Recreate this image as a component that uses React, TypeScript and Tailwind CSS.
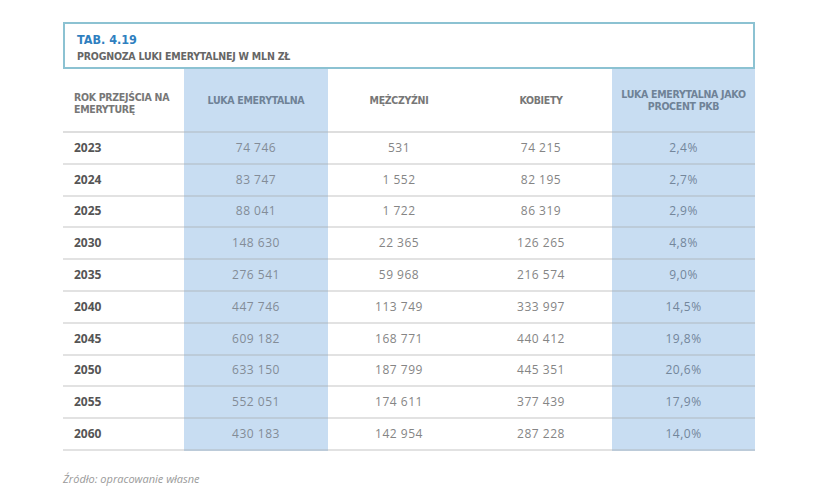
import React from "react";

const rows: [string, string, string, string, string][] = [
  ["2023", "74 746", "531", "74 215", "2,4%"],
  ["2024", "83 747", "1 552", "82 195", "2,7%"],
  ["2025", "88 041", "1 722", "86 319", "2,9%"],
  ["2030", "148 630", "22 365", "126 265", "4,8%"],
  ["2035", "276 541", "59 968", "216 574", "9,0%"],
  ["2040", "447 746", "113 749", "333 997", "14,5%"],
  ["2045", "609 182", "168 771", "440 412", "19,8%"],
  ["2050", "633 150", "187 799", "445 351", "20,6%"],
  ["2055", "552 051", "174 611", "377 439", "17,9%"],
  ["2060", "430 183", "142 954", "287 228", "14,0%"],
];

export default function App() {
  return (
    <div className="w-[828px] h-[504px] bg-white pl-[63px] pt-[22px] font-['Open_Sans',sans-serif]">
      <div className="w-[692px]">
        <div className="h-[47px] border-2 border-[#8cc2d2] pl-[12px] pt-[9px] flex flex-col font-['DejaVu_Sans_Condensed','DejaVu_Sans',sans-serif] font-stretch-condensed font-bold">
          <div className="text-[12.5px] leading-[14px] text-[#2f7fbf]">TAB. 4.19</div>
          <div className="mt-[3px] text-[10.5px] leading-[12px] tracking-[-0.2px] text-[#666]">PROGNOZA LUKI EMERYTALNEJ W MLN ZŁ</div>
        </div>
        <div className="grid grid-cols-[121px_144px_142px_142px_143px] font-['DejaVu_Sans_Condensed','DejaVu_Sans',sans-serif] font-stretch-condensed tracking-[-0.3px]">
          <div className="h-[64px] border-b-2 border-[#dedede] pt-[22px] pl-[11px] text-[10.5px] leading-[12px] font-bold text-[#777]">
            ROK PRZEJŚCIA NA<br />EMERYTURĘ
          </div>
          <div className="h-[64px] border-b-2 border-[#bccbd9] bg-[#c8ddf2] flex items-center justify-center text-[10.5px] leading-[12px] font-bold text-[#6f8297]">
            LUKA EMERYTALNA
          </div>
          <div className="h-[64px] border-b-2 border-[#dedede] flex items-center justify-center text-[10.5px] leading-[12px] font-bold text-[#777]">
            MĘŻCZYŹNI
          </div>
          <div className="h-[64px] border-b-2 border-[#dedede] flex items-center justify-center text-[10.5px] leading-[12px] font-bold text-[#777]">
            KOBIETY
          </div>
          <div className="h-[64px] border-b-2 border-[#bccbd9] bg-[#c8ddf2] flex flex-col items-center justify-center text-[10.5px] leading-[12px] font-bold text-[#6f8297] text-center">
            LUKA EMERYTALNA JAKO<br />PROCENT PKB
          </div>
        </div>
        <div className="grid grid-cols-[121px_144px_142px_142px_143px] font-['Open_Sans',sans-serif]">
          {rows.map((r) => (
            <React.Fragment key={r[0]}>
              <div className="h-[31.8px] border-b-2 border-[#e2e2e2] flex items-center pl-[11px] text-[12px] font-bold text-[#555]">
                {r[0]}
              </div>
              <div className="h-[31.8px] border-b-2 border-[#bccbd9] bg-[#c8ddf2] flex items-center justify-center text-[12px] tracking-[0.5px] text-[#838c97]">
                {r[1]}
              </div>
              <div className="h-[31.8px] border-b-2 border-[#e2e2e2] flex items-center justify-center text-[12px] tracking-[0.5px] text-[#858585]">
                {r[2]}
              </div>
              <div className="h-[31.8px] border-b-2 border-[#e2e2e2] flex items-center justify-center text-[12px] tracking-[0.5px] text-[#858585]">
                {r[3]}
              </div>
              <div className="h-[31.8px] border-b-2 border-[#bccbd9] bg-[#c8ddf2] flex items-center justify-center text-[12px] tracking-[0.5px] text-[#73869b]">
                {r[4]}
              </div>
            </React.Fragment>
          ))}
        </div>
        <div className="mt-[20px] text-[11px] italic text-[#9a9a9a]">
          Źródło: opracowanie własne
        </div>
      </div>
    </div>
  );
}
